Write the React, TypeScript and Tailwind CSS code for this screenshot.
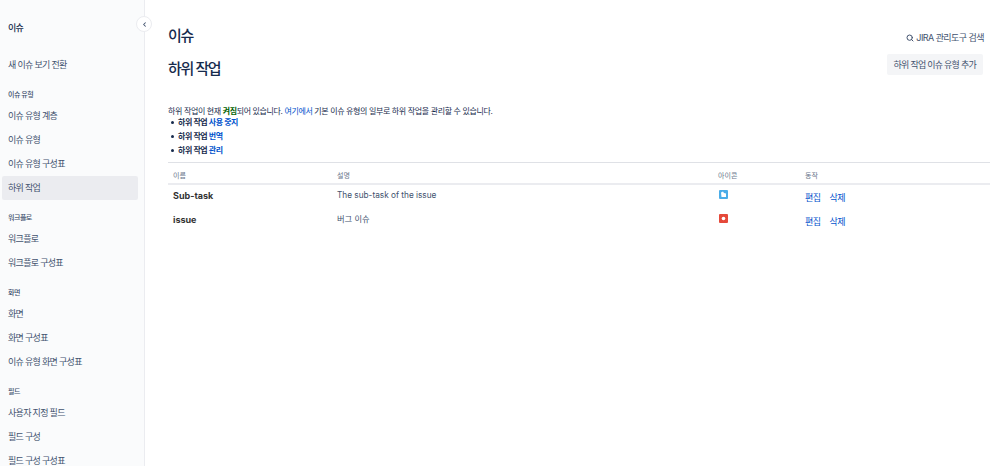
import React from 'react';
import { ChevronLeft, Search } from 'lucide-react';

const font = "[font-family:Inter,'Noto_Sans_CJK_KR',sans-serif]";

const navGroups = [
  { title: '이슈 유형', items: ['이슈 유형 계층', '이슈 유형', '이슈 유형 구성표', '하위 작업'] },
  { title: '워크플로', items: ['워크플로', '워크플로 구성표'] },
  { title: '화면', items: ['화면', '화면 구성표', '이슈 유형 화면 구성표'] },
  { title: '필드', items: ['사용자 지정 필드', '필드 구성', '필드 구성 구성표'] },
];

const NavItem = ({ label }: { label: string }) => (
  <div
    className={`h-[24px] flex items-center pl-[6px] mr-[6px] rounded-[2px] text-[9px] tracking-[-0.7px] text-[#42526e] ${
      label === '하위 작업' ? 'bg-[#ebecf0]' : ''
    }`}
  >
    {label}
  </div>
);

const SubTaskIcon = () => (
  <svg width="9" height="9" viewBox="0 0 9 9">
    <rect width="9" height="9" rx="1" fill="#4bade8" />
    <path d="M2 2.5 L4 1.5 L5 3 L7 3.5 L7 7 L2.5 7 Z" fill="#fff" />
  </svg>
);

const BugIcon = () => (
  <svg width="9" height="9" viewBox="0 0 9 9">
    <rect width="9" height="9" rx="1" fill="#e5493a" />
    <circle cx="4.5" cy="4.5" r="1.8" fill="#fff" />
  </svg>
);

const rows = [
  { name: 'Sub-task', desc: 'The sub-task of the issue', icon: <SubTaskIcon /> },
  { name: 'issue', desc: '버그 이슈', icon: <BugIcon /> },
];

const bullets = ['사용 중지', '번역', '관리'];

export default function App() {
  return (
    <div className={`flex h-[466px] w-[999px] overflow-hidden bg-white ${font}`}>
      <aside className="w-[145px] shrink-0 bg-[#fafbfc] border-r border-[#ebecf0] relative pl-[2px]">
        <div className="h-[56px] flex items-center pl-[6px] text-[9px] font-medium tracking-[-0.7px] text-[#172b4d]">이슈</div>
        <div className="h-[16px] mt-[1px] flex items-center pl-[6px] text-[9px] tracking-[-0.7px] text-[#42526e]">새 이슈 보기 전환</div>
        <div className="mt-[16px]">
          {navGroups.map(group => (
            <div key={group.title} className="mb-[12px]">
              <div className="h-[12px] mb-[3px] flex items-center pl-[6px] text-[7px] font-medium tracking-[-0.5px] text-[#42526e]">
                {group.title}
              </div>
              {group.items.map(item => (
                <NavItem key={item} label={item} />
              ))}
            </div>
          ))}
        </div>
        <button className="absolute left-[136px] top-[16px] w-[16px] h-[16px] rounded-full bg-white border border-[#ebecf0] flex items-center justify-center">
          <ChevronLeft className="w-[7px] h-[7px] text-[#42526e]" strokeWidth={3.5} />
        </button>
      </aside>

      <main className="flex-1 pl-[23px] pr-[9px]">
        <div className="flex items-center justify-between h-[46px] pt-[26px]">
          <h1 className="text-[15px] leading-[22px] tracking-[-1.4px] font-medium text-[#172b4d]">이슈</h1>
          <div className="flex items-center gap-[2px] pr-[6px] pt-[4px] text-[9px] tracking-[-0.55px] text-[#42526e]">
            <Search className="w-[8px] h-[8px]" strokeWidth={3} />
            JIRA 관리도구 검색
          </div>
        </div>
        <div className="flex items-center justify-between mt-[8px] h-[30px]">
          <h2 className="text-[15px] mt-[1px] tracking-[-1.4px] font-medium text-[#172b4d]">하위 작업</h2>
          <button className="h-[21px] px-[7px] mr-[7px] mb-[9px] rounded-[2px] bg-[#f4f5f7] text-[9px] tracking-[-0.75px] text-[#42526e]">
            하위 작업 이슈 유형 추가
          </button>
        </div>

        <p className="mt-[23px] text-[8px] leading-[8px] tracking-[-0.36px] text-[#172b4d]">
          하위 작업이 현재 <b className="text-[#006100] font-bold">켜짐</b>되어 있습니다.{' '}
          <a className="text-[#0052cc]">여기에서</a> 기본 이슈 유형의 일부로 하위 작업을 관리할 수 있습니다.
        </p>
        <ul className="text-[8px] font-semibold tracking-[-0.45px] text-[#172b4d]">
          {bullets.map(link => (
            <li key={link} className="h-[14px] flex items-center gap-[4px] pl-[3px]">
              <span className="w-[3px] h-[3px] rounded-full bg-[#172b4d]" />
              <span>
                하위 작업 <a className="text-[#0052cc]">{link}</a>
              </span>
            </li>
          ))}
        </ul>

        <table className="mt-[5px] w-full border-t border-[#dfe1e6] border-collapse table-fixed">
          <thead>
            <tr className="h-[21px] border-b-2 border-[#ebecf0] text-left text-[7px] text-[#6b778c]">
              <th className="font-normal pl-[5px] pt-[6px] w-[164px]">이름</th>
              <th className="font-normal pl-[5px] pt-[6px] w-[381px]">설명</th>
              <th className="font-normal pl-[5px] pt-[6px] w-[87px]">아이콘</th>
              <th className="font-normal pl-[5px] pt-[6px]">동작</th>
            </tr>
          </thead>
          <tbody>
            {rows.map(row => (
              <tr key={row.name} className="h-[25px] align-top text-[8.25px] text-[#42526e]">
                <td className="pl-[5px] pt-[4px] text-[9px] font-bold text-[#333333]">{row.name}</td>
                <td className="pl-[5px] pt-[4px]">{row.desc}</td>
                <td className="pl-[6px] pt-[5px]">{row.icon}</td>
                <td className="pl-[5px] pt-[6px] text-[9px] tracking-[-0.5px] text-[#0052cc]">
                  <a className="mr-[9px]">편집</a>
                  <a>삭제</a>
                </td>
              </tr>
            ))}
          </tbody>
        </table>
      </main>
    </div>
  );
}
